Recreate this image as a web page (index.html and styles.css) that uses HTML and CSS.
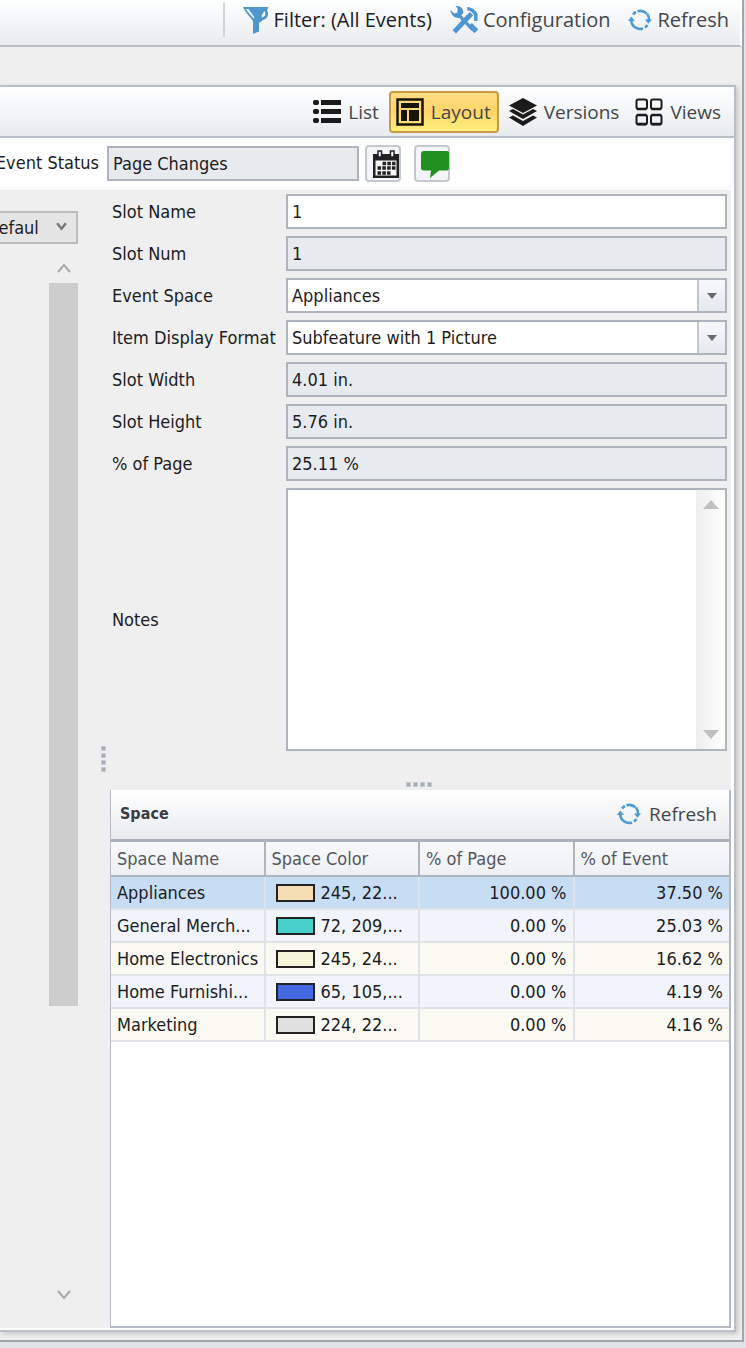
FILE: index.html
```html
<!DOCTYPE html>
<html lang="en">
<head>
<meta charset="utf-8">
<meta name="viewport" content="width=device-width, initial-scale=1">
<title>Event Layout</title>
<link rel="stylesheet" href="styles.css">
</head>
<body>
<svg class="defs" aria-hidden="true">
  <symbol id="refresh" viewBox="0 0 24 24">
    <g fill="none" stroke="#4f9ad4" stroke-width="2.6">
      <path d="M5 6.500A9 9 0 0 1 8 4"/><path d="M9.500 3.300A9 9 0 0 1 18.500 5.500"/>
      <path d="M19 5.500A9 9 0 0 1 21 12"/><path d="M19.500 17A9 9 0 0 1 17 19.500"/>
      <path d="M15 20.500A9 9 0 0 1 3.200 12"/>
    </g>
    <path d="M0 13l3.200-4.500L7 13zM17 11.500h7l-3.600 4.300z" fill="#4f9ad4"/>
  </symbol>
</svg>
<div class="window">
  <header class="toolbar main-bar">
    <span class="divider"></span>
    <button class="tool dark" type="button">
      <svg class="icon" viewBox="0 0 26 28"><path d="M0 1h25.500L24 4.500q1.500 2 1 4.500-1 4-5 5l-4 3v8.500L10 28V15L2 5z" fill="#4f96d0"/><path d="M2.500 3h3l6 8.500-1 1zM21.500 5q1.500 2 .5 4.500-1 1.500-3 2l-.5-2z" fill="#f2f7fb"/></svg>
      Filter: (All Events)
    </button>
    <button class="tool" type="button">
      <svg class="icon wide" viewBox="0 0 26 26"><g fill="none" stroke="#4f96d0"><path d="M4 24L20 7" stroke-width="4.500"/><path d="M7 7l14 15" stroke-width="3"/><path d="M18.500 17.500l6 6" stroke-width="5"/><path d="M16 2.500q5 0 8 5.500v6" stroke-width="3.200"/></g><path d="M0 3.500l4 3.500 3-1V2L5 0q7-.5 7.500 6L9 11Q2 12 0 3.500z" fill="#4f96d0"/><path d="M9.500 14.500l6-6 2.500 3-6 6z" fill="#4f96d0"/></svg>
      Configuration
    </button>
    <button class="tool" type="button"><svg class="icon small"><use href="#refresh"/></svg>Refresh</button>
  </header>

  <main class="panel">
    <nav class="toolbar view-bar">
      <button class="tool" type="button">
        <svg class="icon wide" viewBox="0 0 28 24"><g fill="#1b1b1b"><rect x="0" y="0" width="6" height="5" rx="2"/><rect x="8" y="0" width="20" height="5"/><rect x="0" y="9" width="6" height="5" rx="2"/><rect x="8" y="9" width="20" height="5"/><rect x="0" y="18" width="6" height="5" rx="2"/><rect x="8" y="18" width="20" height="5"/></g></svg>
        List
      </button>
      <button class="tool active" type="button" aria-pressed="true">
        <svg class="icon wide" viewBox="0 0 28 28"><rect x="1.500" y="1.500" width="25" height="25" fill="none" stroke="#16140a" stroke-width="2.500"/><g fill="#16140a"><rect x="5" y="5" width="18" height="5"/><rect x="5" y="12" width="6" height="11"/><rect x="13" y="12" width="10" height="11"/></g></svg>
        Layout
      </button>
      <button class="tool" type="button">
        <svg class="icon wide" viewBox="0 0 28 28"><g fill="#1b1b1b"><path d="M14 0l14 7.500L14 15 0 7.500z"/><path d="M0 13l4-2 10 5.500L24 11l4 2-14 8z"/><path d="M0 19.500l4-2L14 23l10-5.500 4 2L14 28z"/></g></svg>
        Versions
      </button>
      <button class="tool" type="button">
        <svg class="icon wide" viewBox="0 0 28 28"><g fill="none" stroke="#1b1b1b" stroke-width="2"><rect x="1.500" y="1.500" width="10.500" height="9.500" rx="2"/><rect x="16" y="1.500" width="10.500" height="9.500" rx="2"/><rect x="1.500" y="17" width="10.500" height="9.500" rx="2"/><rect x="16" y="17" width="10.500" height="9.500" rx="2"/></g><path d="M2 11h9.500M16.500 11h9.500M2 17h9.500M16.500 17h9.500M2 26h9.500M16.500 26h9.500" stroke="#1b1b1b" stroke-width="2.500"/></svg>
        Views
      </button>
    </nav>

    <div class="status">
      <div class="status-label"><label for="status">Event Status</label></div>
      <input class="field locked status-field" id="status" value="Page Changes" readonly>
      <button class="square" type="button" aria-label="Calendar">
        <svg viewBox="0 0 28 28"><path d="M1 4h26v24H1z" fill="#222"/><path d="M3.500 10.500h21v15h-21z" fill="#fafafa"/><g fill="#fafafa" stroke="#222" stroke-width="1.500"><rect x="6" y="1" width="3.500" height="6"/><rect x="18.500" y="1" width="3.500" height="6"/></g><path d="M10.500 13.500h13M5.500 18h18M5.500 23h13" stroke="#222" stroke-width="3.500" stroke-dasharray="3.600 1.200"/></svg>
      </button>
      <button class="square" type="button" aria-label="Comments">
        <svg viewBox="0 0 28 28"><path d="M3 1h23q2 0 2 2v15q0 2.500-2 2.500H18L9 28l1-7.500H3Q0 20.500 0 18V4q0-3 3-3z" fill="#209120"/></svg>
      </button>
    </div>

    <div class="work">
      <aside class="side">
        <div class="side-pick">
          <select class="mode" aria-label="Layout mode"><option>Default</option></select>
          <svg class="chevron" viewBox="0 0 10 8"><path d="M1 1l4 5 4-5" fill="none" stroke="#777" stroke-width="2.200"/></svg>
        </div>
        <div class="scroll">
          <svg viewBox="0 0 14 10"><path d="M1 9l6-7 6 7" fill="none" stroke="#a8a8a8" stroke-width="2"/></svg>
          <div class="track"><div class="thumb"></div></div>
          <svg viewBox="0 0 14 10"><path d="M1 1l6 7 6-7" fill="none" stroke="#a8a8a8" stroke-width="2"/></svg>
        </div>
      </aside>
      <div class="split-v"><i></i><i></i><i></i><i></i></div>

      <section class="detail">
        <form class="form">
          <label for="name">Slot Name</label><input class="field" id="name" value="1">
          <label for="num">Slot Num</label><input class="field locked" id="num" value="1" readonly>
          <label for="space">Event Space</label>
          <div class="combo"><select class="field" id="space"><option>Appliances</option></select><span class="drop"></span></div>
          <label for="format">Item Display Format</label>
          <div class="combo"><select class="field" id="format"><option>Subfeature with 1 Picture</option></select><span class="drop"></span></div>
          <label for="width">Slot Width</label><input class="field locked" id="width" value="4.01 in." readonly>
          <label for="height">Slot Height</label><input class="field locked" id="height" value="5.76 in." readonly>
          <label for="page">% of Page</label><input class="field locked" id="page" value="25.11 %" readonly>
          <label for="notes">Notes</label>
          <div class="notes"><textarea id="notes"></textarea><div class="notes-bar"><span class="up"></span><span class="down"></span></div></div>
        </form>
        <div class="split-h"><i></i><i></i><i></i><i></i></div>
        <section class="space">
          <header class="toolbar space-bar">
            <h2>Space</h2>
            <button class="tool" type="button"><svg class="icon small"><use href="#refresh"/></svg>Refresh</button>
          </header>
          <table>
            <thead><tr><th>Space Name</th><th>Space Color</th><th>% of Page</th><th>% of Event</th></tr></thead>
            <tbody>
              <tr class="selected"><td>Appliances</td><td><span class="swatch wheat"></span>245, 22...</td><td>100.00 %</td><td>37.50 %</td></tr>
              <tr><td>General Merch...</td><td><span class="swatch teal"></span>72, 209,...</td><td>0.00 %</td><td>25.03 %</td></tr>
              <tr><td>Home Electronics</td><td><span class="swatch beige"></span>245, 24...</td><td>0.00 %</td><td>16.62 %</td></tr>
              <tr><td>Home Furnishi...</td><td><span class="swatch blue"></span>65, 105,...</td><td>0.00 %</td><td>4.19 %</td></tr>
              <tr><td>Marketing</td><td><span class="swatch gray"></span>224, 22...</td><td>0.00 %</td><td>4.16 %</td></tr>
            </tbody>
          </table>
        </section>
      </section>
    </div>
  </main>
</div>
</body>
</html>
```
FILE: styles.css
```css
* { box-sizing: border-box; }
body {
  margin: 0;
  background: #e0e4e8;
  color: #1c1c24;
  font: 18px/22px "DejaVu Sans Condensed", "DejaVu Sans", sans-serif;
}
button, input, select, textarea { font: inherit; color: inherit; }
.defs { position: absolute; width: 0; height: 0; }

.window {
  display: flex;
  flex-direction: column;
  min-height: calc(100vh - 6px);
  margin-right: 2px;
  border: solid #a0a5ab;
  border-width: 0 2px 2px 0;
  background: #efefef;
}
.toolbar {
  display: flex;
  align-items: center;
  justify-content: flex-end;
  background: linear-gradient(#fff, #e8ebef);
  border-bottom: 2px solid #babfc7;
}
.tool {
  display: flex;
  align-items: center;
  gap: 8px;
  padding: 0;
  border: 0;
  background: none;
  color: #44464c;
  font: 19px/28px "Open Sans", "Noto Sans", sans-serif;
  white-space: nowrap;
}
.dark { color: #1c1c24; }
.icon { width: 26px; height: 28px; flex: none; }
.small { width: 24px; height: 24px; }
.wide { width: 28px; }
.main-bar { height: 47px; gap: 18px; padding: 0 11px 6px 0; border-right: 2px solid #fff; }
.main-bar .tool { gap: 5px; font-size: 20px; }
.main-bar .dark { color: #1c1c24; }
.divider { width: 2px; height: 34px; background: #d0d4d8; }

.panel {
  flex: 1;
  display: flex;
  flex-direction: column;
  margin: 38px 6px 8px 0;
  border: solid #b9bfc8;
  border-width: 2px 2px 2px 0;
  background: #fff;
  box-shadow: 2px 2px 5px #c4c4c4;
}
.view-bar { height: 51px; gap: 16px; padding-right: 13px; }
.view-bar .tool { height: 42px; gap: 7px; }
.view-bar .active {
  margin: 0 -6px;
  padding: 0 6px 0 5px;
  border: 2px solid #c99a45;
  border-radius: 4px;
  background: linear-gradient(#ffdc83, #ffd568 50%, #fff07e);
}
.status { display: flex; align-items: center; height: 52px; padding-bottom: 2px; }
.status-label {
  display: flex;
  justify-content: flex-end;
  width: 99px;
  margin-right: 8px;
  overflow: hidden;
  white-space: nowrap;
}
.field {
  width: 100%;
  height: 35px;
  padding: 0 4px;
  border: 2px solid #adb4be;
  border-radius: 0;
  background: #fff;
  appearance: none;
}
.locked { background: #e7eaef; }
.status-field { width: 252px; }
.square {
  width: 36px;
  height: 37px;
  margin-left: 6px;
  padding: 3px 1px 3px 5px;
  border: 2px solid #c4c9d0;
  border-radius: 4px;
  background: #f3f5f8;
}
.square + .square { margin-left: 13px; }
.square svg { display: block; width: 28px; height: 28px; }

.work { flex: 1; display: flex; margin-right: 3px; margin-bottom: 2px; background: #efefef; }
.side { display: flex; flex-direction: column; align-items: flex-end; width: 78px; padding: 21px 0 22px; overflow: hidden; }
.side-pick { position: relative; }
.mode {
  width: 96px;
  height: 33px;
  padding: 0 37px 0 2px;
  border: 2px solid #bcbcbc;
  border-radius: 0;
  background: #e5e5e5;
  appearance: none;
}
.chevron { position: absolute; right: 11px; top: 11px; width: 11px; height: 9px; pointer-events: none; }
.scroll { flex: 1; display: flex; flex-direction: column; align-items: center; gap: 10px; width: 29px; padding: 19px 0 6px; }
.scroll svg { width: 14px; height: 10px; }
.track { flex: 1; width: 100%; }
.thumb { height: 72.5%; background: #cdcdcd; }
.split-v, .split-h { display: flex; align-items: center; justify-content: center; gap: 2px; }
.split-v { flex-direction: column; width: 32px; padding-left: 18px; }
.split-v i, .split-h i { width: 5px; height: 5px; background: #a5adb6; border: 1px solid #c6cbd0; }

.detail { flex: 1; display: flex; flex-direction: column; min-width: 0; }
.form {
  display: grid;
  grid-template-columns: 166px 1fr;
  gap: 7px 8px;
  align-items: center;
  padding: 4px 4px 0 2px;
}
.form label { white-space: nowrap; }
.combo { position: relative; }
.combo .field { display: block; padding-right: 30px; }
.drop {
  position: absolute;
  top: 2px;
  right: 2px;
  bottom: 2px;
  display: grid;
  place-items: center;
  width: 28px;
  border-left: 2px solid #c3c8cf;
  background: linear-gradient(#f7f9fb, #e6e9ed);
  pointer-events: none;
}
.drop::after { content: ""; border: solid transparent; border-width: 6px 5px 0; border-top-color: #636b75; }
.notes { display: flex; height: 263px; border: 2px solid #adb4be; background: #fff; }
.notes textarea { flex: 1; min-width: 0; padding: 5px; border: 0; background: none; resize: none; }
.notes-bar {
  display: flex;
  flex-direction: column;
  align-items: center;
  justify-content: space-between;
  width: 29px;
  padding: 10px 0;
  background: linear-gradient(90deg, #eee, #fff);
}
.up, .down { border: solid transparent; }
.up { border-width: 0 8px 9px; border-bottom-color: #c0c0c0; }
.down { border-width: 9px 8px 0; border-top-color: #c0c0c0; }
.split-h { height: 39px; padding: 28px 4px 0 0; }

.space {
  flex: 1;
  border: solid #b4bac4;
  border-width: 0 2px 2px 1px;
  background: #fff;
}
.space-bar { justify-content: space-between; height: 52px; padding: 0 12px 2px 9px; border-bottom: 3px solid #aab1ba; }
.space-bar h2 { margin: 0; font-size: 16px; line-height: 22px; color: #3a3c42; }
table { width: 100%; table-layout: fixed; border-collapse: separate; border-spacing: 0; }
th, td {
  height: 33px;
  padding: 0 6px;
  overflow: hidden;
  border: solid #dfe2e7;
  border-width: 0 2px 2px 0;
  text-align: left;
  white-space: nowrap;
}
th {
  height: 35px;
  border-color: #aeb5bf;
  background: linear-gradient(#f7f9fb, #eef0f4);
  color: #55575e;
  font-weight: normal;
}
th:last-child, td:last-child { border-right: 0; }
tbody tr { background: #f1f4fa; }
tbody tr:nth-child(odd) { background: #fafaf2; }
tbody .selected:nth-child(odd) { background: #c7ddf4; }
td:nth-child(n+3) { text-align: right; }
.swatch {
  display: inline-block;
  width: 39px;
  height: 18px;
  margin: 0 6px 0 4px;
  border: 2px solid #222;
  vertical-align: -3px;
}
.wheat { background: #f5deb3; }
.teal { background: #48d1cc; }
.beige { background: #f5f5dc; }
.blue { background: #4169e1; }
.gray { background: #e0e0e0; }
```
